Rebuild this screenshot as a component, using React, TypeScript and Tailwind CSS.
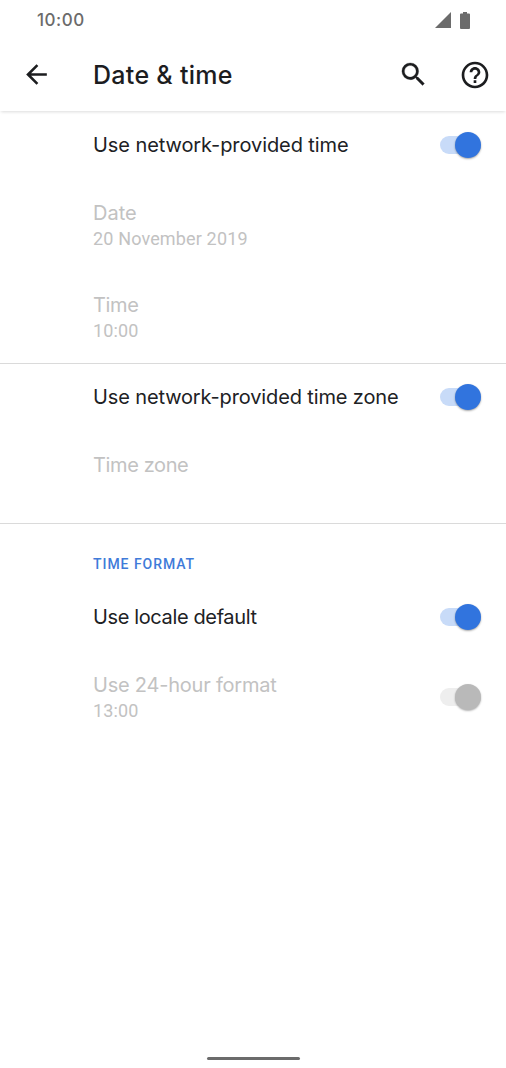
import type { ReactNode } from 'react';

function Icon({ d, className }: { d: string; className: string }) {
  return (
    <svg viewBox="0 0 24 24" fill="currentColor" className={className} aria-hidden="true">
      <path d={d} />
    </svg>
  );
}

function Toggle({ disabled = false }: { disabled?: boolean }) {
  return (
    <div
      role="switch"
      aria-checked="true"
      aria-disabled={disabled}
      className={
        disabled
          ? 'flex h-[18px] w-[41px] items-center justify-end rounded-full bg-[#eeeeee]'
          : 'flex h-[18px] w-[41px] items-center justify-end rounded-full bg-[#c8dbf8]'
      }
    >
      <div
        className={
          disabled
            ? 'size-[26px] shrink-0 rounded-full bg-[#b9b9b9] shadow-[0_1px_2px_rgba(0,0,0,0.3)]'
            : 'size-[26px] shrink-0 rounded-full bg-[#3174de] shadow-[0_1px_2px_rgba(0,0,0,0.35)]'
        }
      />
    </div>
  );
}

function SwitchRow({ children }: { children: ReactNode }) {
  return (
    <div className="flex h-[68px] items-center justify-between pr-[25px] pl-[93px] text-[#202124]">
      {children}
      <Toggle />
    </div>
  );
}

function Detail({ title, value }: { title: ReactNode; value?: string }) {
  return (
    <div className="flex flex-col text-[#c2c2c2]">
      {title}
      {value && <span className="font-[Roboto,sans-serif] text-[18px] leading-[26px] font-normal tracking-[0.15px]">{value}</span>}
    </div>
  );
}

const label = 'whitespace-nowrap text-[20px] leading-[26px] font-normal ';

export default function App() {
  return (
    <main className="flex h-[1068px] w-[506px] flex-col overflow-hidden bg-white font-[Inter,sans-serif]">
      <div className="flex h-10 items-center justify-between pr-[36px] pl-[37px] text-[#6b6b6b]">
        <span className="pt-[2px] text-[17px] font-medium tracking-[0.5px]">10:00</span>
        <div className="flex items-center gap-[9px]">
          <svg width="16" height="16" viewBox="0 0 16 16" fill="currentColor"><path d="M16 0v16H0z" /></svg>
          <svg width="10" height="17" viewBox="0 0 10 17" fill="currentColor">
            <path d="M3 0h4v1.5h2q1 0 1 1V16q0 1-1 1H1q-1 0-1-1V2.5q0-1 1-1h2z" />
          </svg>
        </div>
      </div>
      <header className="flex h-[71px] items-center pr-[15px] pb-[2px] pl-[21px] text-[#1c1d1f] shadow-[0_2px_3px_-1px_rgba(0,0,0,0.14)]">
        <Icon className="size-[31px]" d="M20 11H7.83l5.59-5.59L12 4l-8 8 8 8 1.41-1.41L7.83 13H20v-2z" />
        <h1 className="ml-[41px] pt-[3px] text-[25px] font-medium tracking-[0.3px]">Date &amp; time</h1>
        <Icon
          className="ml-auto size-[31px] stroke-current stroke-[0.2]"
          d="M15.5 14h-.79l-.28-.27A6.471 6.471 0 0 0 16 9.5 6.5 6.5 0 1 0 9.5 16c1.61 0 3.09-.59 4.23-1.57l.27.28v.79l5 4.99L20.49 19l-4.99-5zm-6 0C7.01 14 5 11.99 5 9.5S7.01 5 9.5 5 14 7.01 14 9.5 11.99 14 9.5 14z"
        />
        <Icon
          className="ml-[30px] size-[32px]"
          d="M11 18h2v-2h-2v2zm1-16C6.48 2 2 6.48 2 12s4.48 10 10 10 10-4.48 10-10S17.52 2 12 2zm0 18c-4.41 0-8-3.59-8-8s3.59-8 8-8 8 3.59 8 8-3.59 8-8 8zm0-14c-2.21 0-4 1.79-4 4h2c0-1.1.9-2 2-2s2 .9 2 2c0 2-3 1.75-3 5h2c0-2.25 3-2.5 3-5 0-2.21-1.79-4-4-4z"
        />
      </header>

      <section className="h-[253px] border-b border-[#dadada]">
        <SwitchRow><span className={label + 'tracking-[-0.08px]'}>Use network-provided time</span></SwitchRow>
        <div className="flex flex-col gap-10 pt-[21px] pl-[93px]">
          <Detail title={<span className={label}>Date</span>} value="20 November 2019" />
          <Detail title={<span className={label + 'tracking-[-0.35px]'}>Time</span>} value="10:00" />
        </div>
      </section>

      <section className="-mt-px h-[161px] border-b border-[#dadada]">
        <SwitchRow><span className={label + 'tracking-[-0.13px]'}>Use network-provided time zone</span></SwitchRow>
        <div className="pt-[21px] pl-[93px]">
          <Detail title={<span className={label + 'tracking-[-0.38px]'}>Time zone</span>} />
        </div>
      </section>

      <section>
        <h2 className="h-[59px] pt-[30px] pl-[93px] font-[Roboto,sans-serif] text-[14px] leading-5 font-medium tracking-[0.95px] text-[#3f7bd9]">
          TIME FORMAT
        </h2>
        <SwitchRow><span className={label + 'tracking-[-0.37px]'}>Use locale default</span></SwitchRow>
        <div className="flex items-start justify-between pt-[21px] pr-[25px] pl-[93px]">
          <Detail title={<span className={label + 'tracking-[-0.22px]'}>Use 24-hour format</span>} value="13:00" />
          <div className="pt-4">
            <Toggle disabled />
          </div>
        </div>
      </section>

      <div className="mt-auto mb-2 h-[3px] w-[93px] self-center rounded-full bg-[#6b6b6b]" />
    </main>
  );
}
